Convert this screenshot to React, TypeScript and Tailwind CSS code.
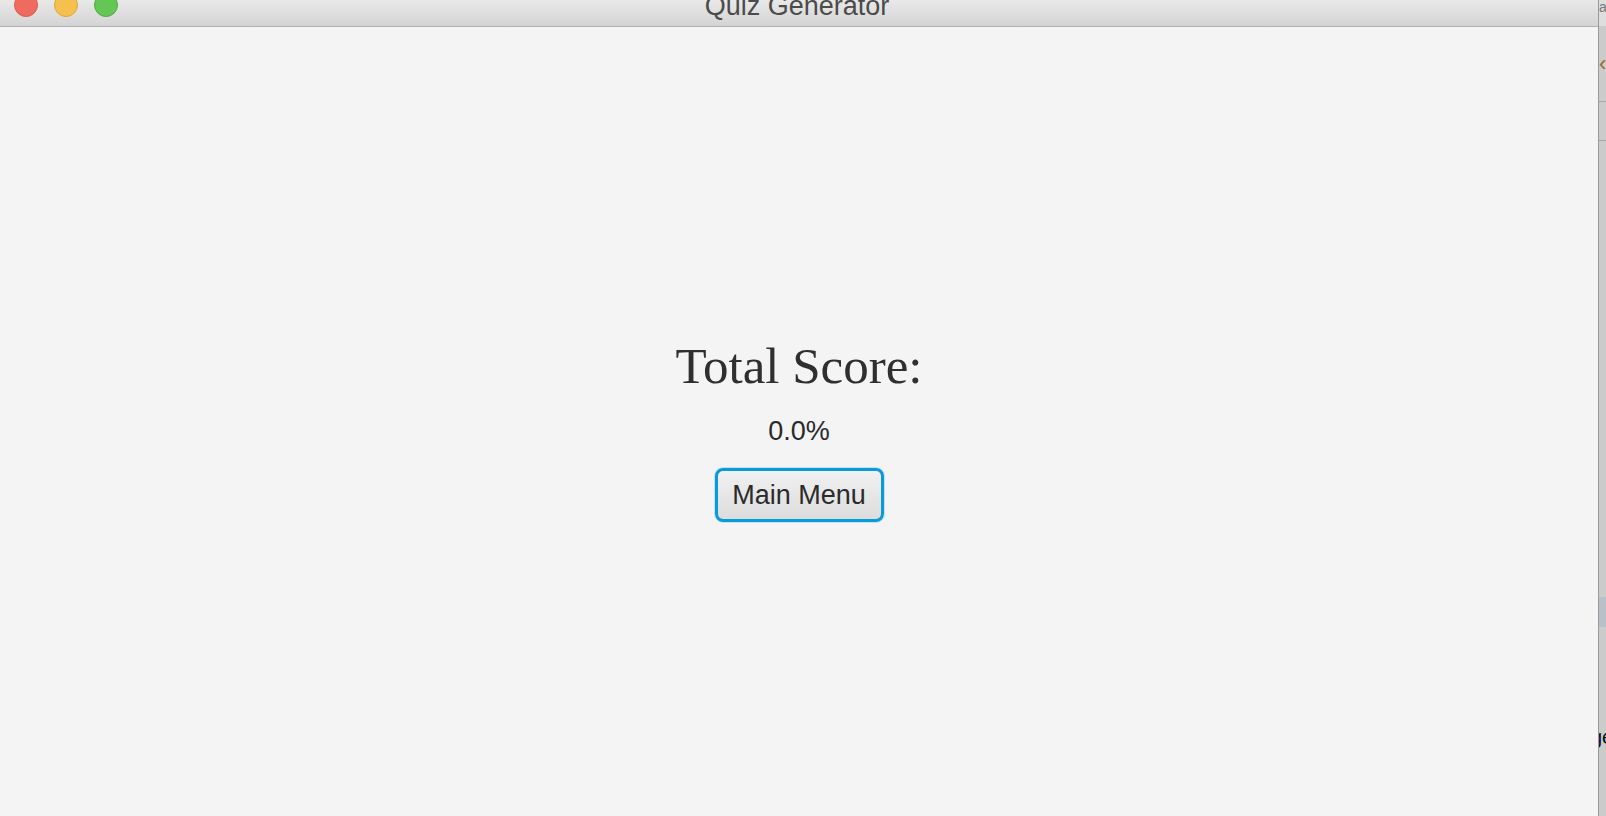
export default function App() {
  return (
    <div className="w-[1606px] h-[816px] flex bg-[#c9c9c9] overflow-hidden" style={{ fontFamily: '"Liberation Sans", Arial, sans-serif' }}>
      {/* window */}
      <div className="w-[1599px] shrink-0 h-full flex flex-col bg-[#f4f4f4] border-r border-[#9a9a9a]">
        {/* title bar */}
        <div className="h-[27px] shrink-0 flex items-start bg-gradient-to-b from-[#e9e9e9] to-[#d4d4d4] border-b border-[#b1b1b1]">
          <div className="flex items-start gap-[16px] pl-[14px] -mt-[7px]">
            <span className="w-[24px] h-[24px] rounded-full bg-[#ef6b5f] border border-[#dc5a50]" />
            <span className="w-[24px] h-[24px] rounded-full bg-[#f6c04f] border border-[#dca43f]" />
            <span className="w-[24px] h-[24px] rounded-full bg-[#63c655] border border-[#52a942]" />
          </div>
          <div className="flex-1 flex justify-center pr-[130px]">
            <span className="text-[27px] leading-[12px] text-[#4b4b4b] pl-[8px]">Quiz Generator</span>
          </div>
        </div>

        {/* content */}
        <div className="flex-1 flex flex-col items-center justify-center pt-[16px]">
          <h1
            className="text-[51px] leading-[56px] text-[#2f2f2f]"
            style={{ fontFamily: '"Liberation Serif", "Times New Roman", serif' }}
          >
            Total Score:
          </h1>
          <div className="mt-[22px] text-[27px] leading-[30px] text-[#2a2a2a]">0.0%</div>
          <button className="mt-[22px] w-[169px] h-[54px] rounded-[8px] border-[3px] border-[#0b9ad8] shadow-[0_0_0_1px_#bfe3f3] bg-gradient-to-b from-[#f1f1f1] to-[#dcdcdc] text-[27px] leading-[30px] text-[#2b2b2b] flex items-center justify-center">
            Main Menu
          </button>
        </div>
      </div>

      {/* sliver of the window behind */}
      <div className="w-[7px] shrink-0 min-w-0 overflow-hidden flex flex-col bg-[#cbcbcb]">
        <div className="h-[26px] shrink-0 bg-[#dedede] text-[#777] text-[14px] leading-[14px]">a</div>
        <div className="h-[76px] shrink-0 flex items-center text-[#9a6a1e] text-[22px] leading-none border-b border-[#a8a8a8]">‹</div>
        <div className="h-[39px] shrink-0 border-b border-[#a8a8a8]" />
        <div className="h-[456px] shrink-0" />
        <div className="h-[30px] shrink-0 bg-[#b9c0c8]" />
        <div className="h-[100px] shrink-0" />
        <div className="text-[20px] leading-[20px] text-[#111] -ml-[8px] whitespace-nowrap">ge</div>
        <div className="flex-1" />
      </div>
    </div>
  );
}
